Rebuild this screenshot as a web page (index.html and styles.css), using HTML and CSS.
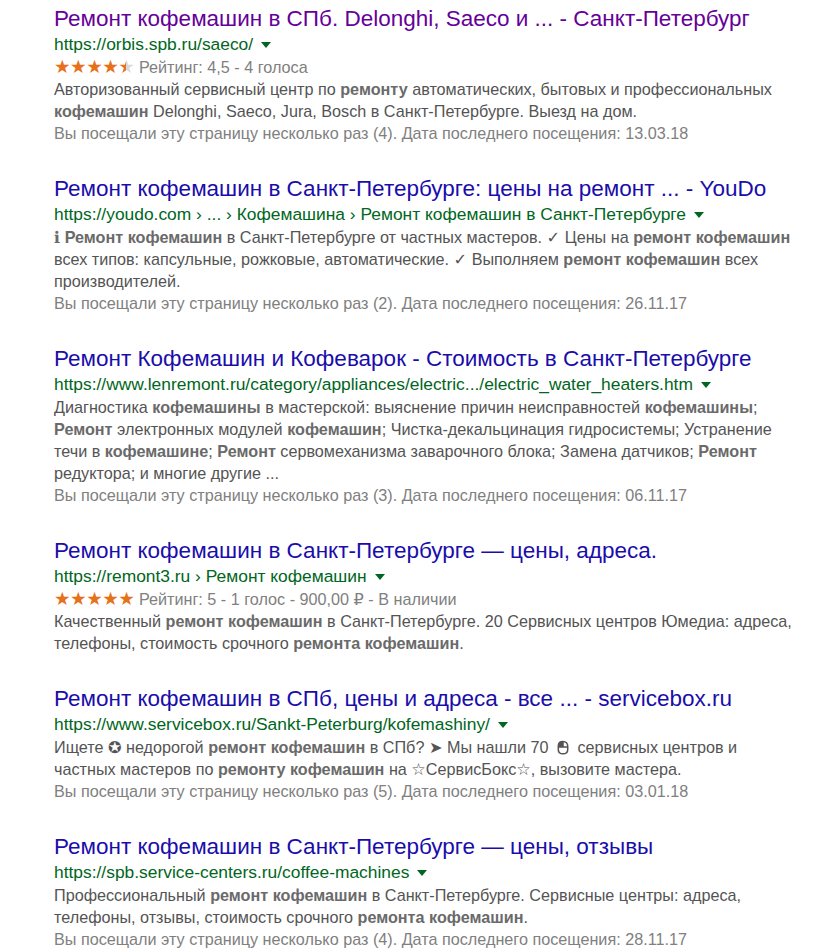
FILE: index.html
```html
<!DOCTYPE html>
<html lang="ru">
<head>
<meta charset="utf-8">
<title>Ремонт кофемашин</title>
<link rel="stylesheet" href="styles.css">
</head>
<body>
<div class="results">

  <div class="result">
    <a class="title visited" href="#">Ремонт кофемашин в СПб. Delonghi, Saeco и ... - Санкт-Петербург</a>
    <div class="url"><cite>https://orbis.spb.ru/saeco/</cite><span class="arrow"></span></div>
    <div class="rating"><span class="stars">★★★★<span class="half">★</span></span> Рейтинг: 4,5 - 4 голоса</div>
    <div class="snippet">Авторизованный сервисный центр по <b>ремонту</b> автоматических, бытовых и профессиональных <b>кофемашин</b> Delonghi, Saeco, Jura, Bosch в Санкт-Петербурге. Выезд на дом.</div>
    <div class="visits">Вы посещали эту страницу несколько раз (4). Дата последнего посещения: 13.03.18</div>
  </div>

  <div class="result">
    <a class="title" href="#">Ремонт кофемашин в Санкт-Петербурге: цены на ремонт ... - YouDo</a>
    <div class="url"><cite>https://youdo.com › ... › Кофемашина › Ремонт кофемашин в Санкт-Петербурге</cite><span class="arrow"></span></div>
    <div class="snippet"><b>ℹ Ремонт кофемашин</b> в Санкт-Петербурге от частных мастеров. ✓ Цены на <b>ремонт кофемашин</b> всех типов: капсульные, рожковые, автоматические. ✓ Выполняем <b>ремонт кофемашин</b> всех производителей.</div>
    <div class="visits">Вы посещали эту страницу несколько раз (2). Дата последнего посещения: 26.11.17</div>
  </div>

  <div class="result">
    <a class="title" href="#">Ремонт Кофемашин и Кофеварок - Стоимость в Санкт-Петербурге</a>
    <div class="url"><cite>https://www.lenremont.ru/category/appliances/electric.../electric_water_heaters.htm</cite><span class="arrow"></span></div>
    <div class="snippet">Диагностика <b>кофемашины</b> в мастерской: выяснение причин неисправностей <b>кофемашины</b>; <b>Ремонт</b> электронных модулей <b>кофемашин</b>; Чистка-декальцинация гидросистемы; Устранение течи в <b>кофемашине</b>; <b>Ремонт</b> сервомеханизма заварочного блока; Замена датчиков; <b>Ремонт</b> редуктора; и многие другие ...</div>
    <div class="visits">Вы посещали эту страницу несколько раз (3). Дата последнего посещения: 06.11.17</div>
  </div>

  <div class="result">
    <a class="title" href="#">Ремонт кофемашин в Санкт-Петербурге — цены, адреса.</a>
    <div class="url"><cite>https://remont3.ru › Ремонт кофемашин</cite><span class="arrow"></span></div>
    <div class="rating"><span class="stars">★★★★★</span> Рейтинг: 5 - 1 голос - 900,00 ₽ - В наличии</div>
    <div class="snippet">Качественный <b>ремонт кофемашин</b> в Санкт-Петербурге. 20 Сервисных центров Юмедиа: адреса, телефоны, стоимость срочного <b>ремонта кофемашин</b>.</div>
  </div>

  <div class="result">
    <a class="title" href="#">Ремонт кофемашин в СПб, цены и адреса - все ... - servicebox.ru</a>
    <div class="url"><cite>https://www.servicebox.ru/Sankt-Peterburg/kofemashiny/</cite><span class="arrow"></span></div>
    <div class="snippet">Ищете ✪ недорогой <b>ремонт кофемашин</b> в СПб? ➤ Мы нашли 70 <svg class="mouse" viewBox="0 0 12 14" width="14" height="15"><path d="M6 1.4C3.3 1.4 1.6 3.2 1.6 5.6v3.2c0 2.5 1.7 4.1 4.4 4.1s4.4-1.6 4.4-4.1V5.6C10.4 3.2 8.7 1.4 6 1.4z" fill="none" stroke="#545454" stroke-width="1.4"/><path d="M1.6 6.6h8.8M6 1.4v5.2" stroke="#545454" stroke-width="1.4"/><path d="M1.6 6.6V5.6C1.6 3.2 3.3 1.4 6 1.4v5.2z" fill="#545454"/></svg> сервисных центров и частных мастеров по <b>ремонту кофемашин</b> на ☆СервисБокс☆, вызовите мастера.</div>
    <div class="visits">Вы посещали эту страницу несколько раз (5). Дата последнего посещения: 03.01.18</div>
  </div>

  <div class="result">
    <a class="title" href="#">Ремонт кофемашин в Санкт-Петербурге — цены, отзывы</a>
    <div class="url"><cite>https://spb.service-centers.ru/coffee-machines</cite><span class="arrow"></span></div>
    <div class="snippet">Профессиональный <b>ремонт кофемашин</b> в Санкт-Петербурге. Сервисные центры: адреса, телефоны, отзывы, стоимость срочного <b>ремонта кофемашин</b>.</div>
    <div class="visits">Вы посещали эту страницу несколько раз (4). Дата последнего посещения: 28.11.17</div>
  </div>

</div>
</body>
</html>
```

FILE: styles.css
```css
html, body {
  margin: 0;
  padding: 0;
  background: #ffffff;
}

body {
  font-family: "Liberation Sans", Arial, "DejaVu Sans", sans-serif;
  color: #545454;
}

.results {
  padding: 6px 0 0 54px;
  width: 744px;
}

.result {
  margin-bottom: 32px;
}

.title {
  display: block;
  font-size: 22.5px;
  line-height: 26px;
  color: #1a0dab;
  text-decoration: none;
  white-space: nowrap;
}

.title.visited {
  color: #660099;
}

.url {
  display: flex;
  align-items: center;
  height: 24px;
  font-size: 17.4px;
  line-height: 24px;
  white-space: nowrap;
}

.url cite {
  font-style: normal;
  color: #006621;
}

.arrow {
  display: inline-block;
  width: 0;
  height: 0;
  margin-left: 8px;
  margin-top: 2px;
  border-left: 5px solid transparent;
  border-right: 5px solid transparent;
  border-top: 6px solid #006621;
}

.rating {
  font-size: 16.2px;
  line-height: 22px;
  color: #808080;
  white-space: nowrap;
}

.stars {
  font-family: "DejaVu Sans", sans-serif;
  font-size: 18.5px;
  color: #e7711b;
  letter-spacing: -0.5px;
}

.half {
  background: linear-gradient(90deg, #e7711b 52%, #d9d9d9 52%);
  -webkit-background-clip: text;
  background-clip: text;
  color: transparent;
}

.snippet {
  font-size: 16.2px;
  line-height: 22px;
  color: #545454;
}

.snippet b {
  color: #6a6a6a;
  font-weight: bold;
}

.mouse {
  vertical-align: -2px;
  margin: 0 3px;
}

.visits {
  font-size: 16.2px;
  line-height: 22px;
  color: #808080;
}
```
